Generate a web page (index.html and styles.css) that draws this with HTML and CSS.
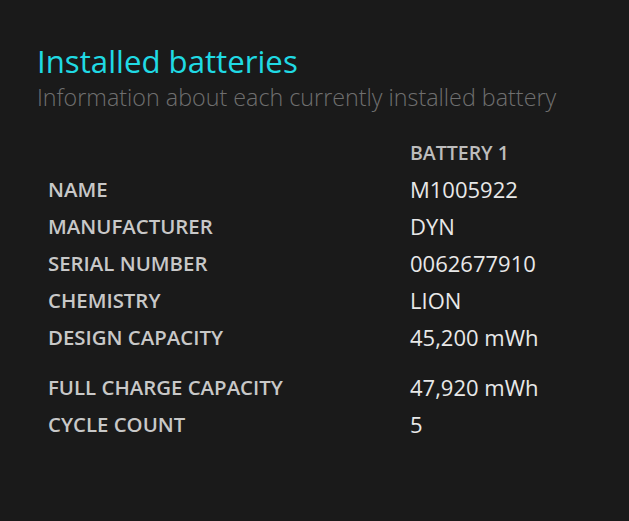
FILE: index.html
```html
<!DOCTYPE html>
<html>
<head>
    <title>Installed batteries</title>
    <meta name="viewport" content="width=device-width, initial-scale=1.0">
    <link rel="stylesheet" href="styles.css">
</head>
<body>
    <div class="painel">
        <h1 class="titulo">Installed batteries</h1>
        <p class="subtitulo">Information about each currently installed battery</p>

        <div class="tabela">
            <div class="rotulo"></div>
            <div class="cabecalho">BATTERY 1</div>

            <div class="rotulo">NAME</div>
            <div class="valor">M1005922</div>

            <div class="rotulo">MANUFACTURER</div>
            <div class="valor">DYN</div>

            <div class="rotulo">SERIAL NUMBER</div>
            <div class="valor">0062677910</div>

            <div class="rotulo">CHEMISTRY</div>
            <div class="valor">LION</div>

            <div class="rotulo">DESIGN CAPACITY</div>
            <div class="valor">45,200 mWh</div>

            <div class="rotulo espaco">FULL CHARGE CAPACITY</div>
            <div class="valor espaco">47,920 mWh</div>

            <div class="rotulo">CYCLE COUNT</div>
            <div class="valor">5</div>
        </div>
    </div>
</body>
</html>
```

FILE: styles.css
```css
body {
    background: #1a1a1a;
    margin: 0;
    font-family: "Open Sans", "Noto Sans", sans-serif;
}
.painel {
    padding: 41px 0 0 37px;
}
.titulo {
    color: #20dae4;
    font-size: 31.2px;
    font-weight: 400;
    line-height: 40px;
    margin: 0;
}
.subtitulo {
    color: #6f6f6f;
    font-size: 23.3px;
    font-weight: 300;
    line-height: 32px;
    margin: 0;
}
.tabela {
    display: grid;
    grid-template-columns: 362px auto; /* valores comecam em x=410 */
    margin: 21px 0 0 11px;
}
.tabela div {
    line-height: 37px;
}
.rotulo {
    color: #c8c8c8;
    font-size: 20.4px;
    font-weight: 600;
}
.cabecalho {
    color: #bdbdbd;
    font-size: 19.5px;
    font-weight: 600;
}
.valor {
    color: #e8e8e8;
    font-size: 22px;
    font-weight: 400;
}
.espaco {
    padding-top: 13px; /* separacao extra antes da capacidade total */
}
```
